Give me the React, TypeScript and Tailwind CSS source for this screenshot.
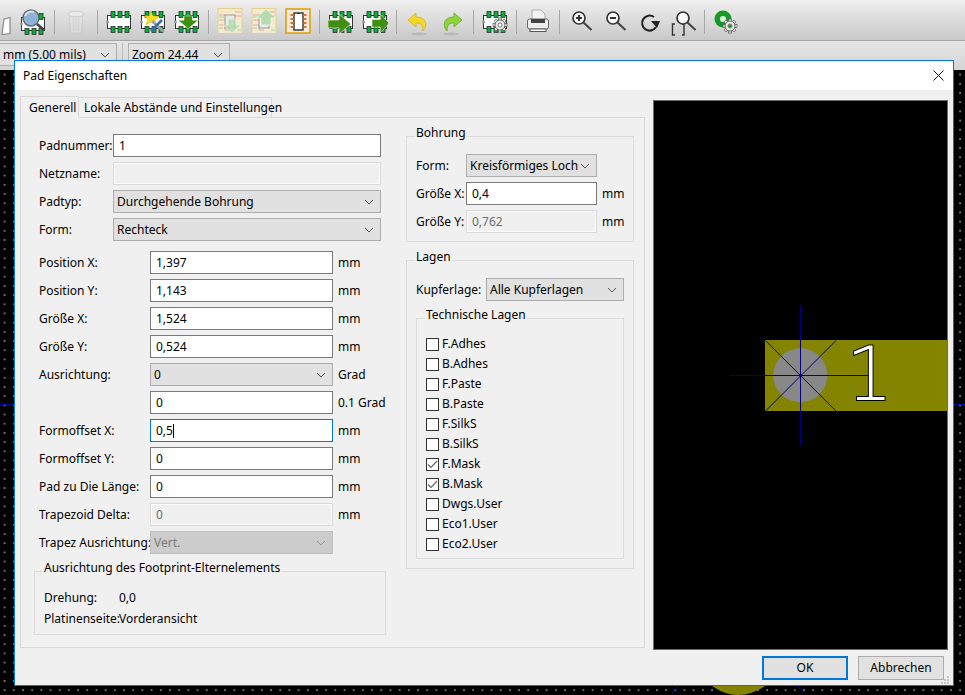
import type { ReactNode } from 'react';

function Chip({ x = 1, y = 4 }: { x?: number; y?: number }) {
  const pads = [5, 12, 19];
  return (
    <g transform={`translate(${x - 1} ${y - 4})`}>
      <rect x="1.5" y="7.5" width="23" height="13" fill="#fff" stroke="#333" />
      <circle cx="1.5" cy="14" r="1.5" fill="#999" />
      {pads.map((p) => (
        <g key={p}>
          <rect x={p} y="3.5" width="4" height="6" fill="#08b03a" stroke="#222" strokeWidth="0.7" />
          <rect x={p} y="18.5" width="4" height="6" fill="#08b03a" stroke="#222" strokeWidth="0.7" />
        </g>
      ))}
    </g>
  );
}

function Arrow({ dir }: { dir: 'down' | 'right' | 'up' }) {
  if (dir === 'down') return <polygon points="7,14 17,14 17,19 24,19 12,29 0,19 7,19" transform="translate(4 -4) scale(0.85)" fill="#3f8f10" stroke="#fff" strokeWidth="0.6" />;
  if (dir === 'up') return <polygon points="9,15 19,15 19,8 24,8 14,-1 4,8 9,8" transform="translate(1 2)" fill="#b6dcae" stroke="#fff" strokeWidth="0.6" />;
  return <polygon points="0,10 11,10 11,4 23,14 11,24 11,18 0,18" fill="#3f8f10" stroke="#fff" strokeWidth="0.6" />;
}

function Gear({ cx, cy, r, stroke = '#555' }: { cx: number; cy: number; r: number; stroke?: string }) {
  const teeth = [0, 45, 90, 135, 180, 225, 270, 315];
  return (
    <g>
      {teeth.map((a) => (
        <rect key={a} x={cx - 1.4} y={cy - r - 2} width="2.8" height={r} fill="#eee" stroke={stroke} strokeWidth="0.7" transform={`rotate(${a} ${cx} ${cy})`} />
      ))}
      <circle cx={cx} cy={cy} r={r} fill="#eee" stroke={stroke} strokeWidth="0.9" />
      <circle cx={cx} cy={cy} r={r * 0.42} fill="#fff" stroke={stroke} strokeWidth="0.8" />
    </g>
  );
}

function Lens({ cx, cy, children }: { cx: number; cy: number; children?: ReactNode }) {
  return (
    <g fill="none" stroke="#333" strokeWidth="1.7">
      <circle cx={cx} cy={cy} r="6" fill="#fafafa" />
      <line x1={cx + 4.5} y1={cy + 4.5} x2={cx + 12.5} y2={cy + 12} strokeWidth="2.1" stroke="#444" />
      {children}
    </g>
  );
}

function FadedBoard() {
  return (
    <g>
      <rect x="1" y="0.5" width="24" height="25" fill="#f3ead0" stroke="#e6cf8e" />
      <path d="M2 7h6M2 12h6M2 17h6v5h5M18 4h6M18 8h6" fill="none" stroke="#e8a89a" />
      <path d="M2 9h5M2 20h4M20 22h4" fill="none" stroke="#a9d6a6" />
      <rect x="8" y="7" width="10" height="13" fill="#e8e8e8" stroke="#999" />
    </g>
  );
}

const icons: Record<string, ReactNode> = {
  page: (
    <g>
      <path d="M18 11l6-1.5v16l-8 1z" fill="#fff" stroke="#888" strokeWidth="1.2" />
    </g>
  ),
  search: (
    <g>
      <Chip y={6} />
      <circle cx="11" cy="10" r="8" fill="#8fb2d8" stroke="#666" strokeWidth="1.4" />
      <path d="M5 8a7 7 0 0 1 9-4" fill="none" stroke="#d8e6f4" strokeWidth="2" />
      <line x1="17" y1="16" x2="24" y2="22" stroke="#444" strokeWidth="2.6" />
    </g>
  ),
  trash: (
    <g opacity="0.55">
      <path d="M6 7h14l-1.5 18h-11z" fill="#e4e4e4" stroke="#c2c2c2" />
      <ellipse cx="13" cy="6" rx="8" ry="2.8" fill="#f2f2f2" stroke="#bbb" />
      <path d="M10 10l.6 13M13 10v13M16 10l-.6 13" stroke="#cfcfcf" />
    </g>
  ),
  chip: <Chip />,
  tools: (
    <g>
      <Chip />
      <polygon points="11,3 13,8 19,8 15,12 17,18 11,14 6,17 8,11 4,8 9,8" fill="#f5e020" stroke="#c9a800" strokeWidth="0.5" />
      <line x1="12" y1="13" x2="24" y2="24" stroke="#9aa3ab" strokeWidth="2.4" />
      <line x1="22" y1="12" x2="11" y2="23" stroke="#3a6ea8" strokeWidth="2.6" />
    </g>
  ),
  down: (
    <g>
      <Chip />
      <Arrow dir="down" />
    </g>
  ),
  fadedDown: (
    <g>
      <FadedBoard />
      <g transform="translate(1 1)" opacity="0.85">
        <polygon points="10,10 18,10 18,16 23,16 14,24 5,16 10,16" fill="#b6dcae" stroke="#fff" strokeWidth="0.5" />
      </g>
    </g>
  ),
  fadedUp: (
    <g>
      <FadedBoard />
      <Arrow dir="up" />
    </g>
  ),
  ic: (
    <g>
      <rect x="1" y="1" width="24" height="24" fill="#efeadb" stroke="#dfa20e" strokeWidth="1.6" />
      <rect x="9" y="5" width="9" height="17" fill="#fff" stroke="#222" strokeWidth="1.3" />
      <path d="M12 5a1.6 1.6 0 0 0 3 0z" fill="#222" />
      {[7, 11, 15, 19].map((y) => (
        <g key={y}>
          <rect x="5.5" y={y - 1} width="3" height="2" fill="#e0722c" />
          <rect x="18.5" y={y - 1} width="3" height="2" fill="#e0722c" />
        </g>
      ))}
    </g>
  ),
  moveA: (
    <g>
      <Chip />
      <g transform="translate(0 2)">
        <Arrow dir="right" />
      </g>
    </g>
  ),
  moveB: (
    <g>
      <Chip />
      <g transform="translate(10 2) scale(0.75 0.95)">
        <Arrow dir="right" />
      </g>
      <rect x="1" y="0" width="0" height="0" />
    </g>
  ),
  undo: (
    <g>
      <ellipse cx="14" cy="26" rx="8" ry="1.5" fill="#b8b8b8" />
      <path d="M11 5L3 12l8 7v-4c5 0 7 2 7 8 4-4 5-14-7-14z" fill="#f4d828" stroke="#d8b010" strokeWidth="0.8" />
    </g>
  ),
  redo: (
    <g>
      <ellipse cx="12" cy="26" rx="8" ry="1.5" fill="#b8b8b8" />
      <path d="M15 5l8 7-8 7v-4c-5 0-7 2-7 8-4-4-5-14 7-14z" fill="#8fd23c" stroke="#69aa22" strokeWidth="0.8" />
    </g>
  ),
  chipGear: (
    <g>
      <Chip />
      <Gear cx={18} cy={17} r={5} />
    </g>
  ),
  print: (
    <g>
      <path d="M7 2h9l4 4v7H7z" fill="#f4f4f4" stroke="#aaa" />
      <rect x="2.5" y="11" width="21" height="10" rx="2" fill="#ededed" stroke="#666" />
      <rect x="6" y="11" width="14" height="4" fill="#444" />
      <rect x="5" y="21" width="16" height="2.5" fill="#fff" stroke="#555" />
    </g>
  ),
  zoomIn: (
    <Lens cx={11} cy={10}>
      <path d="M8 10h6M11 7v6" strokeWidth="2" />
    </Lens>
  ),
  zoomOut: (
    <Lens cx={11} cy={10}>
      <path d="M8 10h6" strokeWidth="2" />
    </Lens>
  ),
  redraw: (
    <g>
      <path d="M20 19a7.5 7.5 0 1 1-2-10" fill="none" stroke="#222" strokeWidth="2.1" />
      <polygon points="15,13 24,13 21,20" fill="#222" />
    </g>
  ),
  zoomFit: (
    <g>
      <path d="M5 16H2.5v11H5M12 16h2v11h-2" fill="none" stroke="#333" strokeWidth="1.4" />
      <Lens cx={13} cy={10} />
    </g>
  ),
  greenGear: (
    <g>
      <circle cx="10" cy="11" r="8.5" fill="#179a24" />
      <circle cx="10" cy="11" r="3" fill="#dff0df" />
      <Gear cx={17} cy={18} r={5} />
      <circle cx="17" cy="18" r="1.8" fill="#179a24" />
    </g>
  ),
};

const toolbar = ['page', 'search', '|', 'trash', '|', 'chip', 'tools', 'down', '|', 'fadedDown', 'fadedUp', 'ic', '|', 'moveA', 'moveB', '|', 'undo', 'redo', '|', 'chipGear', '|', 'print', '|', 'zoomIn', 'zoomOut', 'redraw', 'zoomFit', '|', 'greenGear'];

function Chevron({ color = '#555' }: { color?: string }) {
  return (
    <svg width="10" height="6" viewBox="0 0 10 6" className="shrink-0">
      <path d="M1 1l4 4 4-4" fill="none" stroke={color} strokeWidth="1" />
    </svg>
  );
}

function Select({ value, className = '', disabled = false }: { value: string; className?: string; disabled?: boolean }) {
  return (
    <div className={`h-[23px] flex items-center justify-between pl-[3px] pr-[6px] border ${disabled ? 'bg-[#cccccc] border-[#bfbfbf] text-[#7a7a7a]' : 'bg-[#e1e1e1] border-[#adadad]'} ${className}`}>
      <span className="whitespace-nowrap">{value}</span>
      <Chevron color={disabled ? '#999' : '#555'} />
    </div>
  );
}

function Input({ value, className = '', disabled = false, focused = false }: { value: string; className?: string; disabled?: boolean; focused?: boolean }) {
  const tone = disabled ? 'border-[#d9d9d9] bg-[#f0f0f0] text-[#6d6d6d] shadow-[inset_0_0_0_1px_#fbfbfb]' : focused ? 'border-[#0078d7] bg-white' : 'border-[#7a7a7a] bg-white';
  return (
    <div className={`h-[23px] flex items-center pl-[5px] border ${tone} ${className}`}>
      <span>{value}</span>
      {focused && <span className="w-px h-[14px] bg-black" />}
    </div>
  );
}

function Group({ title, className = '', children }: { title: string; className?: string; children: ReactNode }) {
  return (
    <div className={`relative border border-[#dcdcdc] ${className}`}>
      <span className="absolute -top-[10px] left-[8px] px-px bg-[#f0f0f0] whitespace-nowrap">{title}</span>
      {children}
    </div>
  );
}

function NumRow({ label, value, unit = 'mm', disabled, focused }: { label?: string; value: string; unit?: string; disabled?: boolean; focused?: boolean }) {
  return (
    <div className="flex items-center pl-[5px]">
      <span className="w-[111px] whitespace-nowrap">{label}</span>
      <Input value={value} disabled={disabled} focused={focused} className="w-[183px]" />
      <span className="ml-[5px] whitespace-nowrap">{unit}</span>
    </div>
  );
}

const layers = [
  ['F.Adhes', false],
  ['B.Adhes', false],
  ['F.Paste', false],
  ['B.Paste', false],
  ['F.SilkS', false],
  ['B.SilkS', false],
  ['F.Mask', true],
  ['B.Mask', true],
  ['Dwgs.User', false],
  ['Eco1.User', false],
  ['Eco2.User', false],
] as const;

export default function App() {
  return (
    <div className="relative w-[965px] h-[695px] overflow-hidden flex flex-col bg-black font-['Noto_Sans',sans-serif] text-[12px] leading-none text-black">
      {/* main toolbar */}
      <div className="h-[41px] shrink-0 pt-[3px] border-b border-[#a5a5a5] bg-gradient-to-b from-[#efefef] to-[#c9c9c9]">
        <div className="flex items-center gap-[8px] -ml-[14px] h-[37px]">
          {toolbar.map((name, i) =>
            name === '|' ? (
              <div key={i} className="w-px h-[24px] bg-[#a8a8a8] shrink-0" />
            ) : (
              <svg key={i} width="26" height="30" viewBox="0 0 26 28" className="shrink-0">
                {icons[name]}
              </svg>
            ),
          )}
        </div>
      </div>

      {/* second bar with the grid and zoom selectors */}
      <div className="h-[29px] shrink-0 flex items-start pt-[2px] gap-[5px] -ml-[10px] bg-gradient-to-b from-[#e6e6e6] to-[#d4d4d4]">
        <Select value="mm (5.00 mils)" className="w-[127px] pl-[12px]" />
        <div className="w-px h-[22px] bg-[#bbb]" />
        <Select value="Zoom 24.44" className="w-[102px]" />
      </div>

      {/* canvas behind the dialog */}
      <div className="relative flex-1 bg-black bg-[radial-gradient(#9a9a9a_0.6px,transparent_0.8px)] bg-[length:9.2px_9.2px]">
        <div className="absolute left-0 right-0 top-[334px] h-px bg-[#000d9c]" />
        <svg width="965" height="625" className="absolute left-0 top-0">
          <path d="M712 616q26 18 53 0z" fill="#848400" />
          <path d="M678 616l-6 8M798 616l7 8" stroke="#000d9c" />
        </svg>
      </div>

      {/* Pad properties dialog */}
      <div className="absolute left-[14px] top-[60px] w-[940px] h-[626px] flex flex-col border border-[#0078d7] bg-[#f0f0f0]">
        <div className="h-[29px] shrink-0 bg-white flex items-center justify-between pl-[8px] pr-[9px]">
          <span>Pad Eigenschaften</span>
          <svg width="11" height="11" viewBox="0 0 11 11">
            <path d="M.5.5l10 10M10.500.5l-10 10" stroke="#111" />
          </svg>
        </div>

        <div className="flex-1 flex flex-col pl-[5px] pr-[4px]">
          <div className="flex gap-[8px] pt-[6px]">
            <div className="w-[625px] flex flex-col">
              <div className="flex items-end h-[22px] relative z-10">
                <div className="h-[22px] w-[59px] flex items-center pl-[8px] border border-b-0 border-[#d9d9d9] bg-[#f0f0f0]">Generell</div>
                <div className="h-[20px] w-[194px] -ml-px mb-px flex items-center pl-[5px] border border-b-0 border-[#d9d9d9] bg-[#f0f0f0] whitespace-nowrap">Lokale Abstände und Einstellungen</div>
              </div>
              <div className="h-[531px] -mt-px border border-[#d9d9d9] flex gap-[20px] pl-[13px] pt-[16px]">
                {/* left column */}
                <div className="w-[352px]">
                  <div className="flex flex-col gap-[5px] pl-[5px]">
                    <div className="flex items-center">
                      <span className="w-[74px]">Padnummer:</span>
                      <Input value="1" className="w-[268px]" />
                    </div>
                    <div className="flex items-center">
                      <span className="w-[74px]">Netzname:</span>
                      <Input value="" disabled className="w-[268px]" />
                    </div>
                    <div className="flex items-center">
                      <span className="w-[74px]">Padtyp:</span>
                      <Select value="Durchgehende Bohrung" className="w-[268px]" />
                    </div>
                    <div className="flex items-center">
                      <span className="w-[74px]">Form:</span>
                      <Select value="Rechteck" className="w-[268px]" />
                    </div>
                  </div>
                  <div className="flex flex-col gap-[5px] mt-[10px]">
                    <NumRow label="Position X:" value="1,397" />
                    <NumRow label="Position Y:" value="1,143" />
                    <NumRow label="Größe X:" value="1,524" />
                    <NumRow label="Größe Y:" value="0,524" />
                    <div className="flex items-center pl-[5px]">
                      <span className="w-[111px]">Ausrichtung:</span>
                      <Select value="0" className="w-[183px]" />
                      <span className="ml-[5px]">Grad</span>
                    </div>
                    <NumRow value="0" unit="0.1 Grad" />
                    <NumRow label="Formoffset X:" value="0,5" focused />
                    <NumRow label="Formoffset Y:" value="0" />
                    <NumRow label="Pad zu Die Länge:" value="0" />
                    <NumRow label="Trapezoid Delta:" value="0" disabled />
                    <div className="flex items-center pl-[5px]">
                      <span className="w-[111px] whitespace-nowrap">Trapez Ausrichtung:</span>
                      <Select value="Vert." disabled className="w-[183px]" />
                    </div>
                  </div>
                  <Group title="Ausrichtung des Footprint-Elternelements" className="mt-[17px] h-[64px] pl-[9px] pt-[15px]">
                    <div className="flex items-center h-[21px]">
                      <span className="w-[75px]">Drehung:</span>
                      <span>0,0</span>
                    </div>
                    <div className="flex items-center h-[21px]">
                      <span className="w-[75px] whitespace-nowrap">Platinenseite:</span>
                      <span>Vorderansicht</span>
                    </div>
                  </Group>
                </div>

                {/* right column */}
                <div className="w-[228px] mt-[2px]">
                  <Group title="Bohrung" className="h-[106px] pl-[9px] pt-[17px]">
                    <div className="flex flex-col gap-[5px]">
                      <div className="flex items-center">
                        <span className="w-[50px]">Form:</span>
                        <Select value="Kreisförmiges Loch" className="w-[131px]" />
                      </div>
                      <div className="flex items-center">
                        <span className="w-[50px] whitespace-nowrap">Größe X:</span>
                        <Input value="0,4" className="w-[131px]" />
                        <span className="ml-[5px]">mm</span>
                      </div>
                      <div className="flex items-center">
                        <span className="w-[50px] whitespace-nowrap">Größe Y:</span>
                        <Input value="0,762" disabled className="w-[131px]" />
                        <span className="ml-[5px]">mm</span>
                      </div>
                    </div>
                  </Group>
                  <Group title="Lagen" className="mt-[18px] pl-[9px] pr-[9px] pt-[17px] pb-[9px]">
                    <div className="flex items-center">
                      <span className="w-[70px]">Kupferlage:</span>
                      <Select value="Alle Kupferlagen" className="w-[138px]" />
                    </div>
                    <Group title="Technische Lagen" className="mt-[17px] pl-[9px] pt-[15px] pb-[4px]">
                      {layers.map(([name, checked]) => (
                        <div key={name} className="h-[20px] flex items-center gap-[3px]">
                          <div className="w-[13px] h-[13px] border border-[#333] bg-white flex items-center justify-center">
                            {checked && (
                              <svg width="11" height="9" viewBox="0 0 11 9">
                                <path d="M1 4.500l3 3 6-6.500" fill="none" stroke="#666" strokeWidth="1.200" />
                              </svg>
                            )}
                          </div>
                          <span>{name}</span>
                        </div>
                      ))}
                    </Group>
                  </Group>
                </div>
              </div>
            </div>

            {/* pad preview */}
            <div className="w-[295px] h-[550px] mt-[4px] border-l border-t border-[#6d6d6d] border-r border-b bg-black">
              <svg width="293" height="548" viewBox="654 101 293 548" className="block">
                <rect x="765" y="340" width="183" height="71" fill="#848400" />
                <circle cx="800.300" cy="375.300" r="27" fill="#888888" />
                <g stroke="#000080" fill="none">
                  <path d="M800.500 305v141M730 375.500h140M765.500 340.500l71 71M836 340.500l-71 71" />
                </g>
                <circle cx="800.500" cy="375.500" r="1.500" fill="#000080" />
                <text x="846" y="400" fontFamily="'DejaVu Sans'" fontWeight="200" fontSize="74" fill="#fff" stroke="#000" strokeWidth="2" paintOrder="stroke">
                  1
                </text>
              </svg>
            </div>
          </div>

          <div className="relative flex-1 flex justify-end items-start gap-[10px] pt-[6px] pr-[5px]">
            <button className="w-[86px] h-[24px] border-2 border-[#0078d7] bg-[#e1e1e1]">OK</button>
            <button className="w-[86px] h-[24px] border border-[#adadad] bg-[#e1e1e1]">Abbrechen</button>
            <svg width="8" height="8" viewBox="0 0 8 8" className="absolute right-0 bottom-[1px]">
              <path d="M6 0h2v2H6zM3 3h2v2H3zM6 3h2v2H6zM0 6h2v2H0zM3 6h2v2H3zM6 6h2v2H6z" fill="#c4c4c4" />
            </svg>
          </div>
        </div>
      </div>
    </div>
  );
}
